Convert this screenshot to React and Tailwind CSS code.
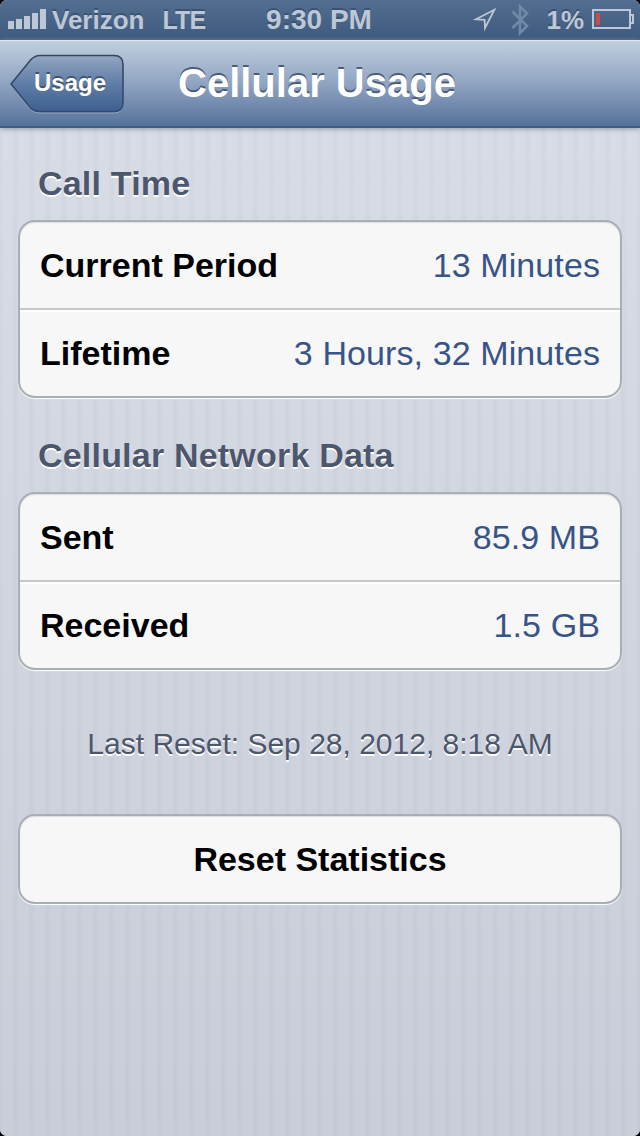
import React from "react";

const sections = [
  {
    title: "Call Time",
    rows: [
      { label: "Current Period", value: "13 Minutes" },
      { label: "Lifetime", value: "3 Hours, 32 Minutes" },
    ],
  },
  {
    title: "Cellular Network Data",
    rows: [
      { label: "Sent", value: "85.9 MB" },
      { label: "Received", value: "1.5 GB" },
    ],
  },
];

const SignalBars = () => (
  <svg className="ml-2 mt-[9px] shrink-0" width="38" height="20" fill="#bdc7d5">
    <rect x="0" y="12" width="6" height="8" />
    <rect x="8" y="10" width="6" height="10" />
    <rect x="16" y="7" width="6" height="13" />
    <rect x="24" y="4" width="6" height="16" />
    <rect x="32" y="0" width="6" height="20" />
  </svg>
);

const LocationIcon = () => (
  <svg className="mt-[7px] shrink-0" width="25" height="25" fill="none">
    <path d="M3 12.3 L21.3 2.8 L12 21 L11.6 12.8 Z" stroke="#bdc7d5" strokeWidth="1.8" />
  </svg>
);

const BluetoothIcon = () => (
  <svg className="ml-[13px] mt-[4px] shrink-0" width="20" height="32" fill="none">
    <path d="M1.5 7.5 L16 22 L9 29 L9 2.5 L16 9.5 L1.5 24" stroke="#7189a8" strokeWidth="2.6" />
  </svg>
);

const BatteryIcon = () => (
  <svg className="ml-2 mt-[9px] shrink-0" width="43" height="20" fill="none">
    <rect x="1" y="1" width="37" height="18" stroke="#bdc7d5" strokeWidth="2" />
    <rect x="4" y="4" width="4" height="12" fill="#c84b50" />
    <path d="M38 6 H41 V14 H38" stroke="#bdc7d5" strokeWidth="2" />
  </svg>
);

const StatusBar = () => (
  <div className="grid h-10 grid-cols-[1fr_auto_1fr] bg-linear-to-b from-[#526f91] to-[#3e5a7f] font-bold text-[#bdc7d5] [text-shadow:0_-2px_0_#3a5273]">
    <div className="flex">
      <SignalBars />
      <span className="ml-[6px] text-[26px] leading-10">Verizon</span>
      <span className="ml-[18px] text-[25px] leading-10 tracking-[-0.8px]">LTE</span>
    </div>
    <span className="-ml-0.5 text-[28px] leading-10">9:30 PM</span>
    <div className="flex justify-end pr-[5px]">
      <LocationIcon />
      <BluetoothIcon />
      <span className="ml-[15px] text-[26px] leading-10">1%</span>
      <BatteryIcon />
    </div>
  </div>
);

const BackButton = ({ children }) => (
  <button className="relative ml-[10px] mt-[13px] h-[60px] w-[115px] self-start">
    <svg className="absolute inset-0" width="115" height="60" fill="none">
      <defs>
        <linearGradient id="back" x1="0" y1="0" x2="0" y2="1">
          <stop offset="0" stopColor="#94a6c2" />
          <stop offset="0.5" stopColor="#5f7da6" />
          <stop offset="1" stopColor="#3e608f" />
        </linearGradient>
        <linearGradient id="backEdge" x1="0" y1="0" x2="0" y2="1">
          <stop offset="0" stopColor="#3b4655" />
          <stop offset="1" stopColor="#2f4a73" />
        </linearGradient>
      </defs>
      <path
        d="M1 31.5 L21 7 Q25 3 30 3 H104 Q113 3 113 12 V50 Q113 59 104 59 H30 Q25 59 21 56 Z"
        stroke="#a3b4cc"
        strokeOpacity="0.7"
      />
      <path
        d="M1 30 L21 5.5 Q25 1.5 30 1.5 H104 Q113 1.5 113 10.5 V48.5 Q113 57.5 104 57.5 H30 Q25 57.5 21 54.5 Z"
        fill="url(#back)"
        stroke="url(#backEdge)"
        strokeWidth="1.6"
      />
    </svg>
    <span className="relative block pb-0.5 pl-[5px] text-2xl leading-[56px] font-bold text-white [text-shadow:0_-2px_0_#3f5473]">
      {children}
    </span>
  </button>
);

const NavBar = () => (
  <div className="relative z-10 flex h-[88px] border-t border-b-2 border-t-[#e1e7ef] border-b-[#3e5c85] bg-linear-to-b from-[#c1cfde] via-[#90a4c2] to-[#56729b] shadow-[0_1px_5px_#8f97a5]">
    <BackButton>Usage</BackButton>
    <h1 className="ml-[53px] text-[40px] leading-[84px] font-bold text-white [text-shadow:0_-2px_0_#4b5c75]">
      Cellular Usage
    </h1>
  </div>
);

const cardClass =
  "overflow-hidden rounded-[17px] border-2 border-[#a8adb6] bg-[#f7f7f7] shadow-[0_1px_1px_#ffffff,inset_0_1px_1px_#dcdde0]";

const Section = ({ title, rows }) => (
  <section className="[&+section]:mt-0.5">
    <h2 className="flex h-[92px] items-end pb-[19px] pl-5 text-[34px] leading-9 font-bold tracking-[0.2px] text-[#4c566c] [text-shadow:0_2px_0_#ffffff]">
      {title}
    </h2>
    <div className={cardClass}>
      {rows.map((row, i) => (
        <div
          key={row.label}
          className={`flex items-center justify-between px-5 text-[34px] ${
            i > 0 ? "h-[88px] border-t-2 border-[#c7c8ca] shadow-[inset_0_2px_0_#ffffff]" : "h-[86px]"
          }`}
        >
          <span className="font-bold text-black">{row.label}</span>
          <span className="tracking-[0.1px] text-[#385487]">{row.value}</span>
        </div>
      ))}
    </div>
  </section>
);

export default function App() {
  return (
    <div className="bg-black font-['Liberation_Sans',Arial,sans-serif] whitespace-nowrap">
      <div className="flex h-[1136px] w-[640px] flex-col overflow-hidden rounded-[7px] bg-[#d7dbe4]">
        <StatusBar />
        <NavBar />
        <main className="flex-1 bg-[repeating-linear-gradient(90deg,#7080a80b_0px_2px,transparent_2px_13px,#7080a80b_13px_16px),linear-gradient(#d8dce5,#c9cdd8)] px-[18px]">
          {sections.map((section) => (
            <Section key={section.title} {...section} />
          ))}
          <p className="mt-[56px] h-9 text-center text-[30px] leading-9 text-[#4c566c] [text-shadow:0_2px_0_#ffffff]">
            Last Reset: Sep 28, 2012, 8:18 AM
          </p>
          <button className={`${cardClass} mt-[52px] h-[90px] w-full text-[34px] font-bold`}>
            Reset Statistics
          </button>
        </main>
      </div>
    </div>
  );
}
